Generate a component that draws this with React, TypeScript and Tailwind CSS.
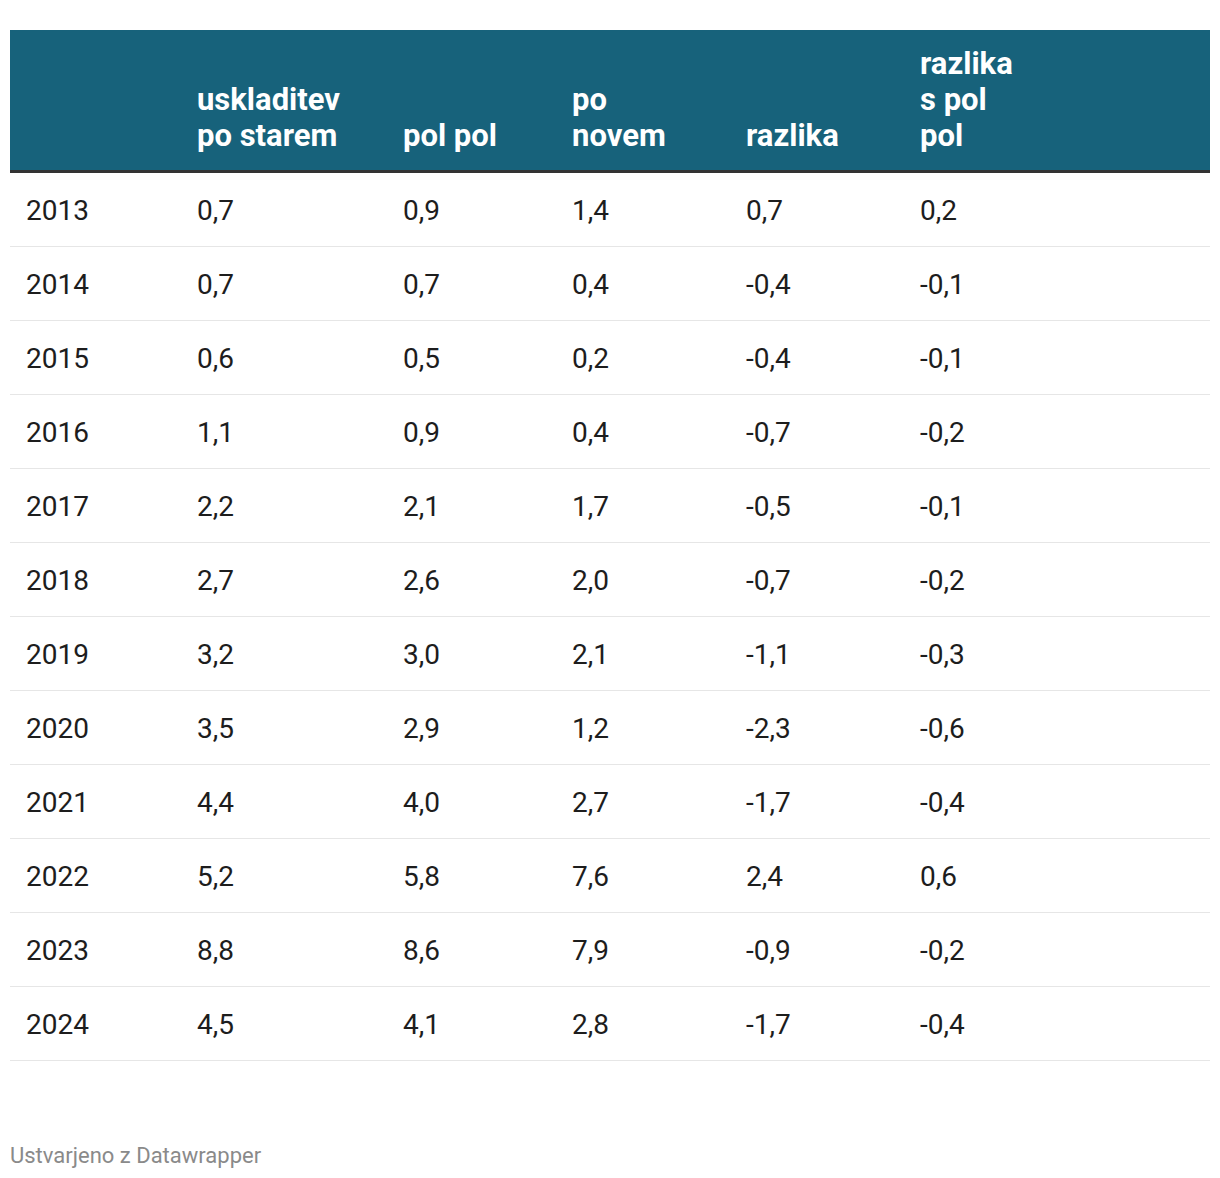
import React from "react";

const cols = ["w-[171px]", "w-[206px]", "w-[169px]", "w-[174px]", "w-[174px]", "flex-1"];

const rows: string[][] = [
  ["2013", "0,7", "0,9", "1,4", "0,7", "0,2"],
  ["2014", "0,7", "0,7", "0,4", "-0,4", "-0,1"],
  ["2015", "0,6", "0,5", "0,2", "-0,4", "-0,1"],
  ["2016", "1,1", "0,9", "0,4", "-0,7", "-0,2"],
  ["2017", "2,2", "2,1", "1,7", "-0,5", "-0,1"],
  ["2018", "2,7", "2,6", "2,0", "-0,7", "-0,2"],
  ["2019", "3,2", "3,0", "2,1", "-1,1", "-0,3"],
  ["2020", "3,5", "2,9", "1,2", "-2,3", "-0,6"],
  ["2021", "4,4", "4,0", "2,7", "-1,7", "-0,4"],
  ["2022", "5,2", "5,8", "7,6", "2,4", "0,6"],
  ["2023", "8,8", "8,6", "7,9", "-0,9", "-0,2"],
  ["2024", "4,5", "4,1", "2,8", "-1,7", "-0,4"],
];

const headers: string[][] = [
  [],
  ["uskladitev", "po starem"],
  ["pol pol"],
  ["po", "novem"],
  ["razlika"],
  ["razlika", "s pol", "pol"],
];

export default function App() {
  return (
    <div
      className="w-[1220px] h-[1178px] bg-white px-[10px] pt-[30px]"
      style={{ fontFamily: "Roboto, 'Liberation Sans', sans-serif" }}
    >
      <div className="flex items-end bg-[#17627b] pt-[16px] pb-[16px] border-b-[3px] border-[#333333]">
        {headers.map((h, i) => (
          <div key={i} className={`${cols[i]} pl-[16px] text-white font-bold text-[31px] leading-[36px]`}>
            {h.map((l, j) => (
              <div key={j}>{l}</div>
            ))}
          </div>
        ))}
      </div>
      {rows.map((r, i) => (
        <div key={i} className="flex items-center h-[74px] pt-[2px] border-b border-[#e6e6e6]">
          {r.map((c, j) => (
            <div key={j} className={`${cols[j]} pl-[16px] text-[28px] text-[#1d1d1d] leading-[36px]`}>
              {c}
            </div>
          ))}
        </div>
      ))}
      <div className="mt-[81px] text-[22px] leading-[28px] text-[#8a8a8a]">Ustvarjeno z Datawrapper</div>
    </div>
  );
}
